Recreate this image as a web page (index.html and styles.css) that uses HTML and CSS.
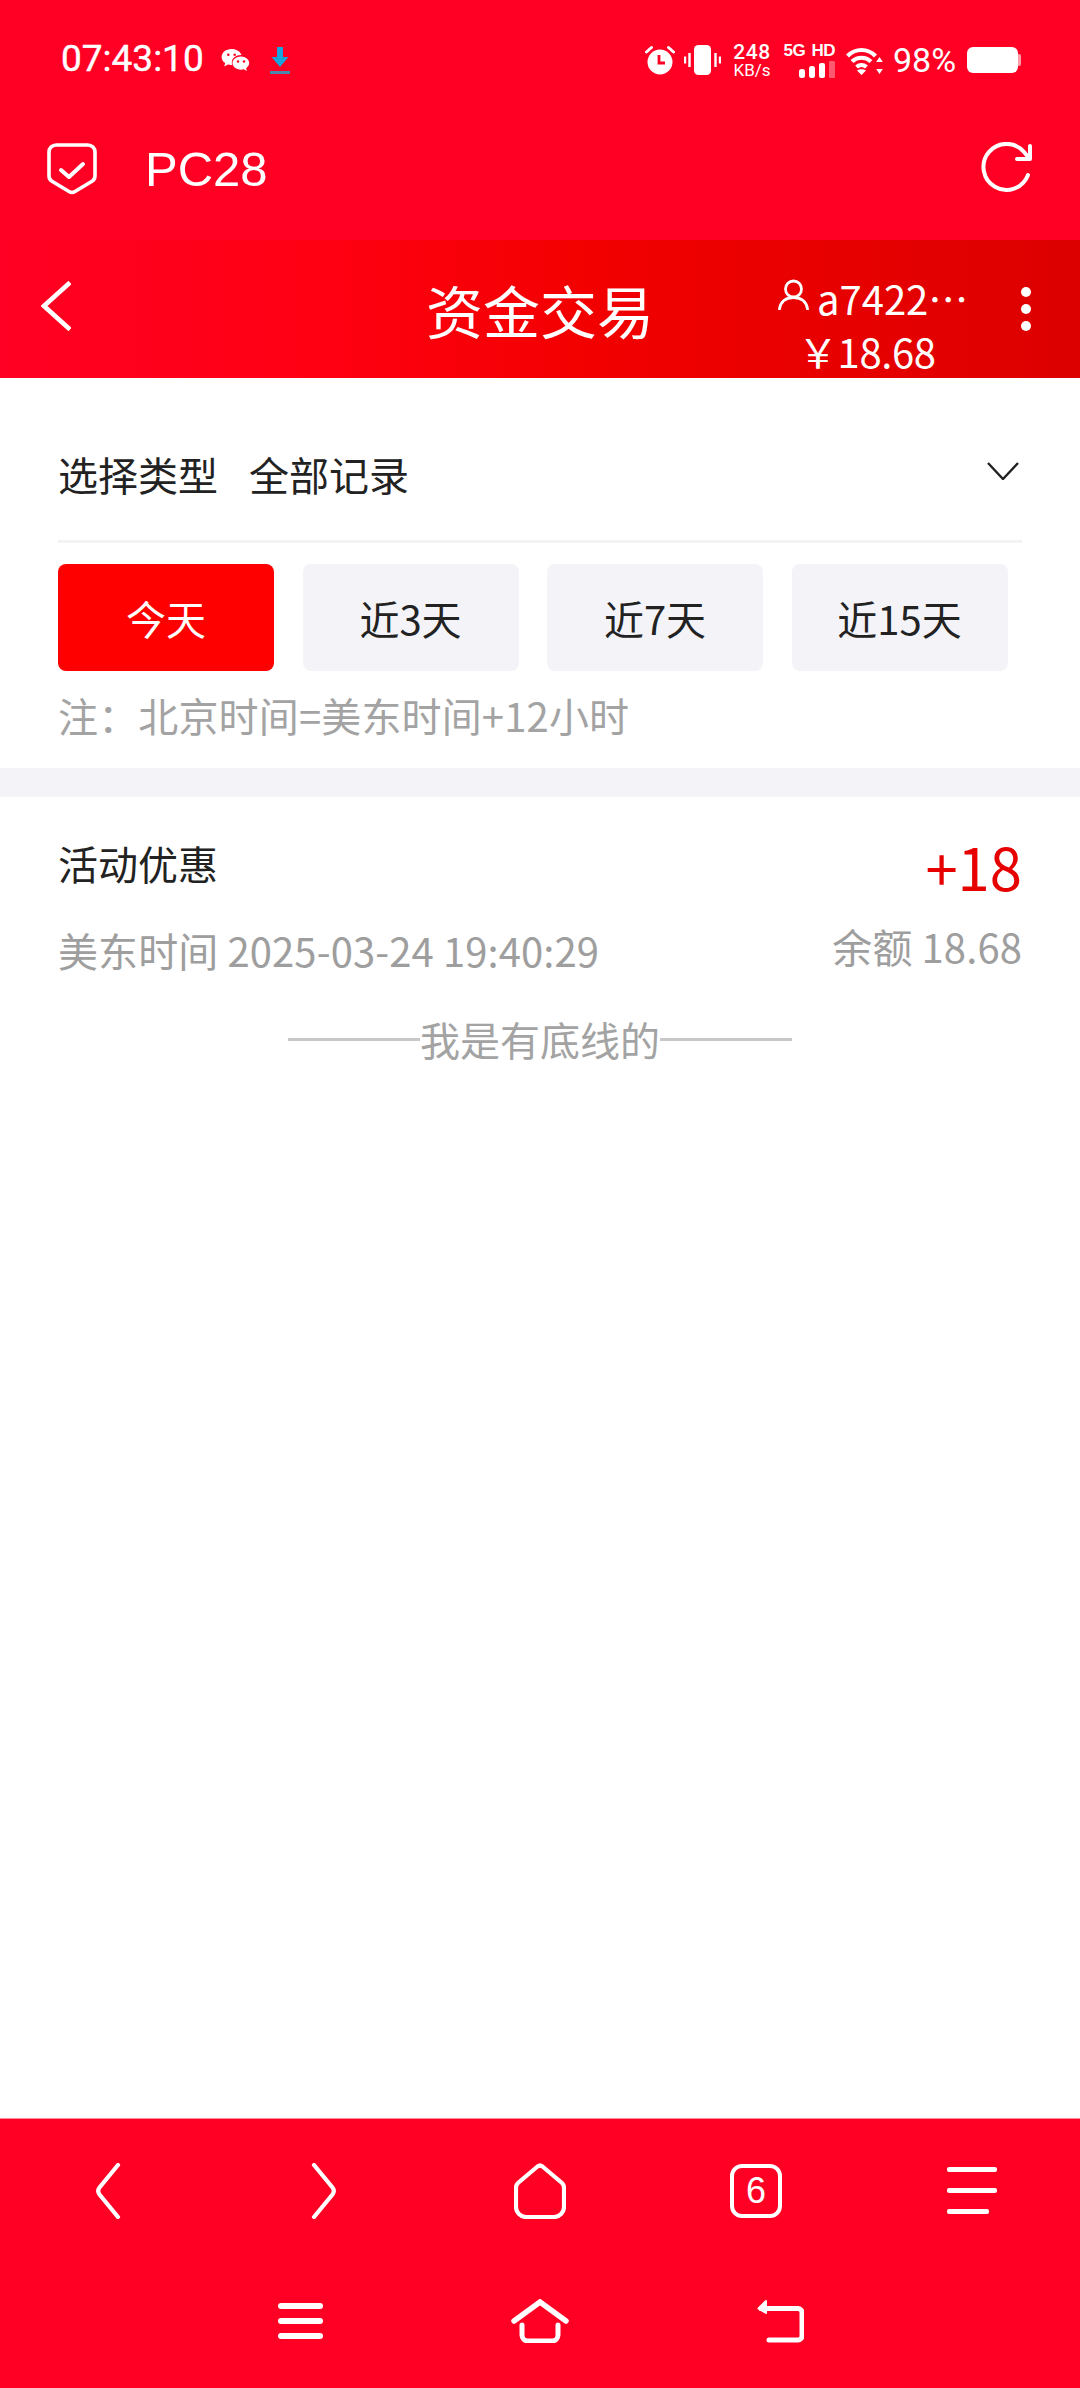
FILE: index.html
```html
<!DOCTYPE html>
<html lang="zh-CN">
<head>
<meta charset="utf-8">
<title>资金交易</title>
<link rel="stylesheet" href="styles.css">
</head>
<body>
<div class="page">
  <header class="status">
    <div class="status-left">
      <span class="clock">07:43:10</span>
      <svg class="ic-wechat" viewBox="0 0 30 25"><path fill="#fff" d="M10.500 1C4.900 1 .6 4.600.6 9c0 2.500 1.400 4.700 3.600 6.100L3.200 18.500l3.700-2c1.100.3 2.300.5 3.600.5h.7a7 7 0 0 1-.4-2.300c0-4.400 4.200-7.600 9.100-7.600h.5C19.300 3.400 15.300 1 10.500 1z"/><path fill="#fff" d="M20 8.500c-4.700 0-8.500 3-8.500 6.600s3.800 6.600 8.500 6.600c1 0 2-.1 2.900-.4l3 1.700-.8-2.800c1.900-1.200 3.100-3.100 3.100-5.100 0-3.600-3.500-6.600-8.200-6.600z"/><circle cx="7.300" cy="6.800" r="1.300" fill="#ff0024"/><circle cx="13.700" cy="6.800" r="1.300" fill="#ff0024"/><circle cx="17" cy="13.500" r="1.200" fill="#ff0024"/><circle cx="23" cy="13.500" r="1.200" fill="#ff0024"/></svg>
      <svg class="ic-download" viewBox="0 0 20 27"><path fill="#18a5dc" d="M7 0h6v10h5.500L10 20 1.500 10H7z"/><rect y="24" width="20" height="3" fill="#4f86ad"/></svg>
    </div>
    <div class="status-right">
      <svg class="ic-alarm" viewBox="0 0 30 30"><circle cx="15" cy="17" r="12.500" fill="#fff"/><path d="M1.500 7 6.500 2.500M28.500 7l-5-4.500" stroke="#fff" stroke-width="3" stroke-linecap="round"/><path d="M14 10v8h6" fill="none" stroke="#ff0024" stroke-width="2.800"/></svg>
      <svg class="ic-vibrate" viewBox="0 0 37 30"><rect x="10" width="17" height="30" rx="4.500" fill="#fff"/><path d="M5.500 8v14M1 11.500v7M31.500 8v14M36 11.500v7" stroke="#fff" stroke-width="2.400"/></svg>
      <div class="speed"><span class="speed-num">248</span><span class="speed-unit">KB/s</span></div>
      <div class="signal">
        <span class="signal-text">5G HD</span>
        <svg class="ic-bars" viewBox="0 0 36 17"><rect y="8" width="6" height="9" rx="2.500" fill="#fff"/><rect x="10" y="5" width="6" height="12" rx="2.500" fill="#fff"/><rect x="20" y="2" width="6" height="15" rx="2" fill="#fff"/><rect x="30" width="6" height="17" rx="1" fill="#fff" opacity=".35"/></svg>
      </div>
      <svg class="ic-wifi" viewBox="0 0 37 29"><path d="M1.500 10c8-8 20-8 28 0M6 15.500c5.500-5 13.500-5 19 0M10.500 21c3-2.500 7-2.500 10 0" fill="none" stroke="#fff" stroke-width="4.200"/><path d="M15.500 29 11 24.500c2.500-1.800 6.500-1.800 9 0z" fill="#fff"/><path d="M33.500 11l3.300 5h-6.600zM33.500 28l-3.300-5h6.600z" fill="#fff"/></svg>
      <span class="battery-pct">98%</span>
      <div class="battery"><span class="battery-body"></span><span class="battery-nub"></span></div>
    </div>
  </header>

  <div class="browser-bar">
    <svg class="ic-shield" viewBox="0 0 50 52"><path d="M9 2h32a7 7 0 0 1 7 7v24c0 2.500-1 4-3 5.200L28 48.500c-2 1.200-4 1.200-6 0L5 38.200C3 37 2 35.500 2 33V9a7 7 0 0 1 7-7z" fill="none" stroke="#fff" stroke-width="3.600"/><path d="M14 27l8 7 14-13" fill="none" stroke="#fff" stroke-width="4" stroke-linecap="round" stroke-linejoin="round"/></svg>
    <span class="site-name">PC28</span>
    <svg class="ic-refresh" viewBox="0 0 52 52"><path d="M47 33A23 23 0 1 1 43 10l5 6" fill="none" stroke="#fff" stroke-width="4" stroke-linecap="round"/><path d="M49 4v13H36" fill="none" stroke="#fff" stroke-width="4" stroke-linecap="round" stroke-linejoin="round"/></svg>
  </div>

  <div class="title-bar">
    <svg class="ic-back" viewBox="0 0 30 50"><path d="M29 1.500 3 25l26 23.500" fill="none" stroke="#fff" stroke-width="4.600"/></svg>
    <h1 class="page-title">资金交易</h1>
    <div class="account">
      <div class="account-name">
        <svg class="ic-user" viewBox="0 0 31 31"><circle cx="15.500" cy="10" r="8" fill="none" stroke="#fff" stroke-width="2.800"/><path d="M1.500 30c1-7 6-11.500 14-11.500S28.500 23 29.500 30" fill="none" stroke="#fff" stroke-width="2.800" stroke-linecap="round"/></svg>
        <span>a7422…</span>
      </div>
      <div class="account-balance">￥18.68</div>
    </div>
    <div class="more"><i></i><i></i><i></i></div>
  </div>

  <main class="content">
    <section class="filters">
      <div class="select-row">
        <span class="select-label">选择类型</span>
        <span class="select-value">全部记录</span>
        <svg class="ic-chevron" viewBox="0 0 32 18"><path d="M1 1l15 16L31 1" fill="none" stroke="#222" stroke-width="2.400"/></svg>
      </div>
      <div class="ranges">
        <button class="range range-active">今天</button>
        <button class="range">近3天</button>
        <button class="range">近7天</button>
        <button class="range">近15天</button>
      </div>
      <p class="note">注：北京时间=美东时间+12小时</p>
    </section>

    <section class="record">
      <div class="record-top">
        <span class="record-title">活动优惠</span>
        <span class="record-amount">+18</span>
      </div>
      <div class="record-bottom">
        <span class="record-text">美东时间 2025-03-24 19:40:29</span>
        <span class="record-text record-balance">余额 18.68</span>
      </div>
    </section>

    <div class="end-line"><span>我是有底线的</span></div>
  </main>

  <nav class="toolbar">
    <svg class="ic-tool-chev" viewBox="0 0 26 56"><path d="M23 2 4.500 24.500c-1.500 2-1.500 5 0 7L23 54" fill="none" stroke="#fff" stroke-width="4.200" stroke-linecap="round"/></svg>
    <svg class="ic-tool-chev" viewBox="0 0 26 56"><path d="M3 2l18.500 22.500c1.500 2 1.500 5 0 7L3 54" fill="none" stroke="#fff" stroke-width="4.200" stroke-linecap="round"/></svg>
    <svg class="ic-tool-home" viewBox="0 0 52 56"><path d="M23.500 3.500 4 20c-1.500 1.500-2 3-2 5v19a10 10 0 0 0 10 10h28a10 10 0 0 0 10-10V25c0-2-.5-3.500-2-5L28.500 3.500c-1.500-1.200-3.500-1.200-5 0z" fill="none" stroke="#fff" stroke-width="4.200"/></svg>
    <div class="tab-count"><span>6</span></div>
    <div class="tool-menu"><i></i><i></i><i class="short"></i></div>
  </nav>

  <nav class="navbar">
    <div class="nav-menu"><i></i><i></i><i></i></div>
    <svg class="ic-nav-home" viewBox="0 0 58 44"><path d="M3 22 29 3l26 19" fill="none" stroke="#fff" stroke-width="5.500" stroke-linecap="round"/><path d="M11 26v10a6 6 0 0 0 6 6h24a6 6 0 0 0 6-6V26" fill="none" stroke="#fff" stroke-width="5" stroke-linecap="round"/></svg>
    <svg class="ic-nav-back" viewBox="0 0 48 44"><path d="M10 2 2.500 9.500 10 14V11.500z" fill="#fff" stroke="#fff" stroke-width="2" stroke-linejoin="round"/><path d="M5 9.500h37a4 4 0 0 1 4 4V37a4 4 0 0 1-4 4H13" fill="none" stroke="#fff" stroke-width="5" stroke-linecap="round"/></svg>
  </nav>
</div>
</body>
</html>
```
FILE: styles.css
```css
* { box-sizing: border-box; }
html, body { margin: 0; padding: 0; }
body { width: 1080px; height: 2388px; overflow: hidden; background: #fff; font-family: "Noto Sans CJK SC", "Noto Sans", sans-serif; color: #222; }
svg { display: block; flex: none; }
.page { width: 1080px; height: 2388px; display: flex; flex-direction: column; }

.status { height: 90px; background: #ff0024; display: flex; justify-content: space-between; align-items: center; padding: 30px 59px 0 61px; color: #fff; }
.status-left, .status-right { display: flex; align-items: center; }
.clock { font: 400 37px/44px Roboto, sans-serif; -webkit-text-stroke: .4px #fff; width: 160px; margin-top: -2px; }
.ic-wechat { width: 30px; height: 25px; }
.ic-download { width: 20px; height: 27px; margin-left: 19px; }
.ic-alarm { width: 30px; height: 30px; }
.ic-vibrate { width: 37px; height: 30px; margin-left: 9px; }
.speed { display: flex; flex-direction: column; align-items: center; margin-left: 13px; width: 36px; font-family: Roboto, sans-serif; }
.speed-num { font-size: 21px; line-height: 20px; font-weight: 500; letter-spacing: .5px; }
.speed-unit { font-size: 17px; line-height: 17px; }
.signal { display: flex; flex-direction: column; align-items: flex-end; margin-left: 16px; width: 49px; }
.signal-text { font: 700 17px/18px "Liberation Sans", sans-serif; white-space: nowrap; letter-spacing: -.5px; word-spacing: 2px; }
.ic-bars { width: 36px; height: 17px; margin-top: 1px; }
.ic-wifi { width: 37px; height: 29px; margin-left: 11px; }
.battery-pct { font: 34px/40px Roboto, sans-serif; margin-left: 10px; width: 74px; }
.battery { display: flex; align-items: center; }
.battery-body { width: 51px; height: 26px; background: #fff; border-radius: 6px; }
.battery-nub { width: 3px; height: 12px; background: #ff9aa8; border-radius: 0 2px 2px 0; }

.browser-bar { height: 150px; background: #ff0024; display: flex; align-items: center; padding: 8px 47px 0 47px; color: #fff; }
.ic-shield { width: 50px; height: 52px; margin-top: -1px; }
.site-name { font: 49px/56px "Liberation Sans", Arial, sans-serif; margin-left: 48px; flex: 1; }
.ic-refresh { width: 52px; height: 52px; margin-top: -2px; }

.title-bar { height: 138px; background: linear-gradient(to right, #ff0024 0%, #ff0012 30%, #f20000 55%, #dc0000 100%); display: flex; align-items: center; padding: 0 0 0 41px; color: #fff; position: relative; }
.ic-back { width: 30px; height: 50px; margin-top: -6px; }
.page-title { position: absolute; left: 0; right: 0; top: 34px; margin: 0; font-size: 57px; line-height: 70px; font-weight: 400; text-align: center; }
.account { position: absolute; left: 778px; top: 32px; width: 200px; }
.account-name { display: flex; align-items: flex-start; font-size: 40px; line-height: 52px; white-space: nowrap; margin-left: -1px; }
.ic-user { width: 31px; height: 31px; margin: 7px 8px 0 1px; }
.account-balance { font-size: 40px; line-height: 50px; margin: 2px 0 0 20px; white-space: nowrap; letter-spacing: -.4px; }
.more { position: absolute; left: 1021px; top: 47px; display: flex; flex-direction: column; gap: 7px; }
.more i { display: block; width: 10px; height: 10px; border-radius: 50%; background: #fff; }

.content { flex: 1; display: flex; flex-direction: column; background: #fff; }
.filters { padding: 68px 58px 21px; border-bottom: 29px solid #f4f4f8; height: 419px; }
.select-row { display: flex; align-items: center; height: 97px; padding-bottom: 39px; border-bottom: 3px solid #f3f3f5; font-size: 40px; line-height: 58px; }
.select-value { margin-left: 31px; flex: 1; }
.ic-chevron { width: 32px; height: 18px; margin: -6px 3px 0 0; }
.ranges { display: flex; gap: 28.500px; margin-top: 21px; }
.range { width: 216px; height: 107px; border: 0; border-radius: 8px; background: #f4f4f8; color: #222; font: 40px/58px "Noto Sans CJK SC", sans-serif; padding: 0; }
.range-active { background: #ff0000; color: #fff; }
.note { margin: 15px 0 0; font-size: 40px; line-height: 58px; color: #a3a3a3; white-space: nowrap; letter-spacing: .15px; }

.record { padding: 37px 58px 0; }
.record-top, .record-bottom { display: flex; justify-content: space-between; align-items: flex-start; }
.record-title { font-size: 40px; line-height: 58px; }
.record-amount { font-size: 58px; line-height: 70px; color: #e60000; margin-top: -3px; }
.record-bottom { margin-top: 20px; }
.record-text { font-size: 40px; line-height: 58px; color: #9e9e9e; letter-spacing: .1px; }
.record-balance { margin-top: -4px; }

.end-line { display: flex; justify-content: center; align-items: center; margin-top: 31px; font-size: 40px; line-height: 58px; color: #a3a3a3; }
.end-line::before, .end-line::after { content: ""; width: 132px; height: 3px; background: #c8c8c8; }

.toolbar { height: 144px; background: #ff0024; display: grid; grid-template-columns: repeat(5, 216px); justify-items: center; align-items: center; border-top: 1px solid #ff8a9c; }
.ic-tool-chev { width: 26px; height: 56px; }
.ic-tool-home { width: 52px; height: 56px; }
.tab-count { width: 52px; height: 54px; border: 4px solid #fff; border-radius: 12px; display: flex; align-items: center; justify-content: center; color: #fff; font: 36px/36px "Liberation Sans", sans-serif; }
.tool-menu { width: 50px; display: flex; flex-direction: column; gap: 16px; }
.tool-menu i { display: block; height: 5px; border-radius: 2px; background: #fff; }
.tool-menu i.short { width: 42px; }

.navbar { height: 126px; background: #ff0024; display: grid; grid-template-columns: repeat(3, 240px); padding: 0 180px 8px; justify-items: center; align-items: center; }
.nav-menu { width: 45px; display: flex; flex-direction: column; gap: 9px; }
.nav-menu i { display: block; height: 6px; border-radius: 3px; background: #fff; }
.ic-nav-home { width: 58px; height: 44px; }
.ic-nav-back { width: 48px; height: 44px; }
```
